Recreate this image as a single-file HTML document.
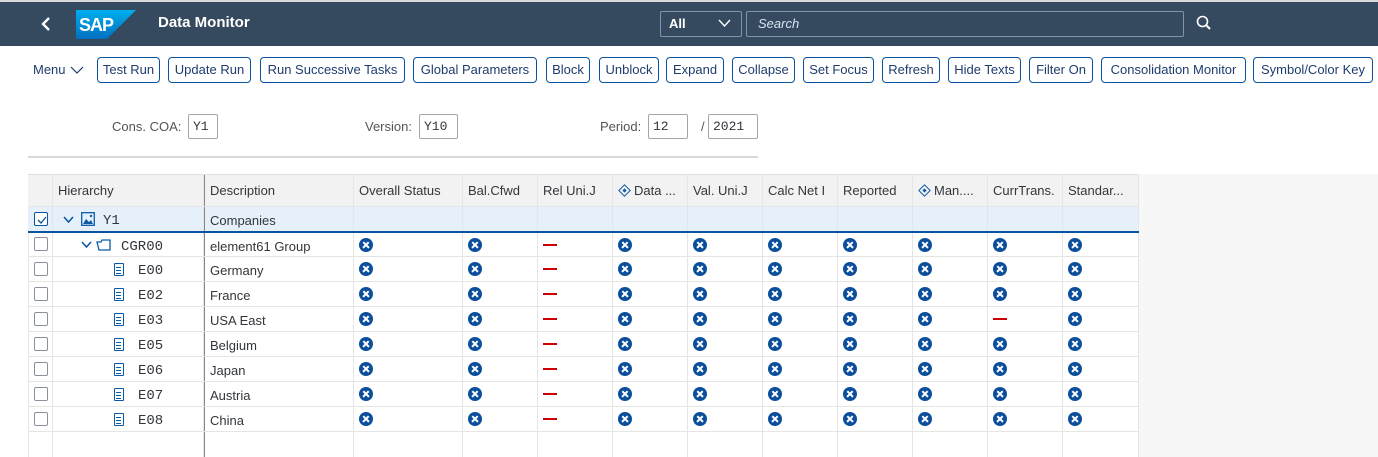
<!DOCTYPE html>
<html><head><meta charset="utf-8"><style>
*{box-sizing:border-box;margin:0;padding:0}
body{width:1378px;height:457px;overflow:hidden;background:#fff;font-family:"Liberation Sans",Arial,sans-serif;position:relative;color:#32363a}
.hdr{position:absolute;left:0;top:0;width:1378px;height:46px;background:#354a5f;border-top:2px solid #d9d9d9}
.abs{position:absolute}
.btn{position:absolute;top:57px;height:26px;border:1px solid #0854a0;border-radius:4px;font-size:13px;line-height:24px;color:#1f3c6e;text-align:center;white-space:nowrap}
.lbl{position:absolute;font-size:13px;color:#555}
.inp{position:absolute;top:114px;height:25px;border:1px solid #a6a6a6;border-radius:2px;font-family:"Liberation Mono",monospace;font-size:13px;line-height:23px;padding-left:4px;color:#32363a;background:#fff}
.row{position:absolute;left:28px;height:25px;width:1111px;border-bottom:1px solid #e5e5e5}
.c{position:absolute;top:0;height:100%;border-right:1px solid #e5e5e5;font-size:13px;line-height:28px;padding-left:5px;white-space:nowrap;overflow:hidden}
.hrow .c{line-height:32px;color:#32363a}
.x{display:inline-block;width:14px;height:14px;border-radius:50%;background:#0b4f9c;position:relative;vertical-align:middle;margin-top:-5px}
.x:before,.x:after{content:"";position:absolute;left:3px;top:6px;width:8px;height:2.4px;background:#fff;transform:rotate(45deg)}
.x:after{transform:rotate(-45deg)}
.d{display:inline-block;width:14px;height:2px;background:#c00;vertical-align:middle;margin-top:-5px}
.cb{position:absolute;left:6px;top:5px;width:14px;height:14px;border:1px solid #89919a;border-radius:2px;background:#fff}
.doc{position:absolute;top:6px;width:10px;height:13px;border:1.5px solid #0b5aa8;border-radius:1px;background:linear-gradient(#0b5aa8,#0b5aa8) 1px 3px/5px 1px no-repeat,linear-gradient(#0b5aa8,#0b5aa8) 1px 6px/5px 1px no-repeat,linear-gradient(#0b5aa8,#0b5aa8) 1px 9px/5px 1px no-repeat}
.mono{font-family:"Liberation Mono",monospace;font-size:14px}
.dia{display:inline-block;width:9px;height:9px;border:1.5px solid #0b5aa8;transform:rotate(45deg);margin:0 5px 0 2px;vertical-align:middle;margin-top:-3px;position:relative}
.dia:after{content:"";position:absolute;left:1.5px;top:1.5px;width:3px;height:3px;background:#0b5aa8}
</style></head><body>
<div class="hdr"></div>
<svg class="abs" style="left:40px;top:16px" width="12" height="16"><path d="M9 2 L3 8 L9 14" stroke="#fff" stroke-width="2.4" fill="none"/></svg>
<svg class="abs" style="left:76px;top:10px" width="60" height="29"><defs><linearGradient id="g" x1="0" y1="0" x2="0" y2="1"><stop offset="0" stop-color="#00aeef"/><stop offset="1" stop-color="#0070c0"/></linearGradient></defs><path d="M0 0H60L31 29H0Z" fill="url(#g)"/><text x="3" y="21" font-family="Liberation Sans" font-weight="bold" font-size="18" fill="#fff" letter-spacing="-1">SAP</text></svg>
<div class="abs" style="left:158px;top:14px;color:#fff;font-weight:bold;font-size:15px">Data Monitor</div>
<div class="abs" style="left:660px;top:11px;width:82px;height:26px;border:1px solid #7d95ad;border-radius:2px;color:#fff;font-size:13px;line-height:24px;padding-left:8px;font-weight:bold">All</div>
<svg class="abs" style="left:718px;top:19px" width="13" height="9"><path d="M1 1 L6.5 7 L12 1" stroke="#fff" stroke-width="1.4" fill="none"/></svg>
<div class="abs" style="left:746px;top:11px;width:438px;height:26px;border:1px solid #7d95ad;border-radius:2px;color:#d6e4f2;font-size:13px;line-height:24px;padding-left:11px;font-style:italic">Search</div>
<svg class="abs" style="left:1196px;top:15px" width="16" height="16"><circle cx="6.5" cy="6.5" r="5" stroke="#fff" stroke-width="1.6" fill="none"/><path d="M10 10 L14 14" stroke="#fff" stroke-width="2"/></svg>

<div class="abs" style="left:33px;top:62px;font-size:13px;color:#1f3c6e">Menu</div>
<svg class="abs" style="left:70px;top:66px" width="14" height="8"><path d="M1 1 L7 7 L13 1" stroke="#1f3c6e" stroke-width="1.2" fill="none"/></svg>
<div class="btn" style="left:97px;width:63px">Test Run</div>
<div class="btn" style="left:168px;width:83px">Update Run</div>
<div class="btn" style="left:260px;width:145px">Run Successive Tasks</div>
<div class="btn" style="left:413px;width:124px">Global Parameters</div>
<div class="btn" style="left:546px;width:44px">Block</div>
<div class="btn" style="left:599px;width:60px">Unblock</div>
<div class="btn" style="left:666px;width:58px">Expand</div>
<div class="btn" style="left:732px;width:63px">Collapse</div>
<div class="btn" style="left:803px;width:71px">Set Focus</div>
<div class="btn" style="left:882px;width:58px">Refresh</div>
<div class="btn" style="left:948px;width:73px">Hide Texts</div>
<div class="btn" style="left:1029px;width:64px">Filter On</div>
<div class="btn" style="left:1101px;width:145px">Consolidation Monitor</div>
<div class="btn" style="left:1253px;width:120px">Symbol/Color Key</div>

<div class="lbl" style="left:112px;top:119px">Cons. COA:</div>
<div class="inp" style="left:188px;width:30px">Y1</div>
<div class="lbl" style="left:365px;top:119px">Version:</div>
<div class="inp" style="left:419px;width:39px">Y10</div>
<div class="lbl" style="left:600px;top:119px">Period:</div>
<div class="inp" style="left:648px;width:40px">12</div>
<div class="lbl" style="left:701px;top:119px">/</div>
<div class="inp" style="left:708px;width:50px">2021</div>
<div class="abs" style="left:28px;top:156px;width:730px;height:2px;background:#d9d9d9"></div>

<div class="abs" style="left:1139px;top:174px;width:239px;height:283px;background:#f7f7f7"></div>
<div class="abs" style="left:28px;top:174px;width:1111px;height:283px;border-left:1px solid #e5e5e5"></div>
<div class="row hrow" style="top:174px;height:33px;background:#f2f2f2;border-top:1px solid #e0e0e0">
<div class="c" style="left:0;width:25px"></div>
<div class="c" style="left:25px;width:151px">Hierarchy</div>
<div class="c" style="left:176px;width:150px;border-left:1px solid #888">Description</div>
<div class="c" style="left:326px;width:109px">Overall Status</div>
<div class="c" style="left:435px;width:75px">Bal.Cfwd</div>
<div class="c" style="left:510px;width:75px">Rel Uni.J</div>
<div class="c" style="left:585px;width:75px"><span class="dia"></span>Data ...</div>
<div class="c" style="left:660px;width:75px">Val. Uni.J</div>
<div class="c" style="left:735px;width:75px">Calc Net I</div>
<div class="c" style="left:810px;width:75px">Reported</div>
<div class="c" style="left:885px;width:75px"><span class="dia"></span>Man....</div>
<div class="c" style="left:960px;width:75px">CurrTrans.</div>
<div class="c" style="left:1035px;width:76px">Standar...</div>
</div>
<div class="row" style="top:207px;background:#e5f0fa;border-bottom:2px solid #0854a0;height:26px">
<div class="c" style="left:0;width:25px"><div class="cb" style="border-color:#0854a0"></div><svg class="abs" style="left:9px;top:9px" width="10" height="8"><path d="M1 4 L4 7 L9 1" stroke="#0854a0" stroke-width="1.3" fill="none"/></svg></div>
<div class="c" style="left:25px;width:151px"><svg class="abs" style="left:10px;top:9px" width="11" height="7"><path d="M1 1 L5.5 6 L10 1" stroke="#0854a0" stroke-width="1.5" fill="none"/></svg><svg class="abs" style="left:28px;top:5px" width="14" height="14"><rect x="0.7" y="0.7" width="12.6" height="12.6" stroke="#0b5aa8" fill="none" stroke-width="1.3"/><path d="M2 12 L5 7 L8 10 L10 8 L12 12Z" fill="#0b5aa8"/><circle cx="10" cy="4" r="1.2" fill="#0b5aa8"/></svg><span class="mono" style="position:absolute;left:50px">Y1</span></div>
<div class="c" style="left:176px;width:150px;border-left:1px solid #888">Companies</div>
<div class="c" style="left:326px;width:109px"></div><div class="c" style="left:435px;width:75px"></div><div class="c" style="left:510px;width:75px"></div><div class="c" style="left:585px;width:75px"></div><div class="c" style="left:660px;width:75px"></div><div class="c" style="left:735px;width:75px"></div><div class="c" style="left:810px;width:75px"></div><div class="c" style="left:885px;width:75px"></div><div class="c" style="left:960px;width:75px"></div><div class="c" style="left:1035px;width:76px"></div>
</div>
<div class="row" style="top:233px;height:24px">
<div class="c" style="left:0;width:25px"><div class="cb" style="top:4px"></div></div>
<div class="c" style="left:25px;width:151px"><svg class="abs" style="left:28px;top:8px" width="11" height="7"><path d="M1 1 L5.5 6 L10 1" stroke="#0854a0" stroke-width="1.5" fill="none"/></svg><svg class="abs" style="left:43px;top:5px" width="16" height="14"><path d="M1 4 H5 L6 2 H14 V12 H3 Z M1 4 L3 12" stroke="#0b5aa8" fill="none" stroke-width="1.3"/></svg><span class="mono" style="position:absolute;left:68px">CGR00</span></div>
<div class="c" style="left:176px;width:150px;border-left:1px solid #888">element61 Group</div>
<div class="c" style="left:326px;width:109px"><span class="x"></span></div><div class="c" style="left:435px;width:75px"><span class="x"></span></div><div class="c" style="left:510px;width:75px"><span class="d"></span></div><div class="c" style="left:585px;width:75px"><span class="x"></span></div><div class="c" style="left:660px;width:75px"><span class="x"></span></div><div class="c" style="left:735px;width:75px"><span class="x"></span></div><div class="c" style="left:810px;width:75px"><span class="x"></span></div><div class="c" style="left:885px;width:75px"><span class="x"></span></div><div class="c" style="left:960px;width:75px"><span class="x"></span></div><div class="c" style="left:1035px;width:76px"><span class="x"></span></div>
</div>

<div class="row" style="top:257px"><div class="c" style="left:0;width:25px"><div class="cb"></div></div><div class="c" style="left:25px;width:151px"><div class="doc" style="left:61px"></div><span class="mono" style="position:absolute;left:85px">E00</span></div><div class="c" style="left:176px;width:150px;border-left:1px solid #888">Germany</div><div class="c" style="left:326px;width:109px"><span class="x"></span></div><div class="c" style="left:435px;width:75px"><span class="x"></span></div><div class="c" style="left:510px;width:75px"><span class="d"></span></div><div class="c" style="left:585px;width:75px"><span class="x"></span></div><div class="c" style="left:660px;width:75px"><span class="x"></span></div><div class="c" style="left:735px;width:75px"><span class="x"></span></div><div class="c" style="left:810px;width:75px"><span class="x"></span></div><div class="c" style="left:885px;width:75px"><span class="x"></span></div><div class="c" style="left:960px;width:75px"><span class="x"></span></div><div class="c" style="left:1035px;width:76px"><span class="x"></span></div></div>

<div class="row" style="top:282px"><div class="c" style="left:0;width:25px"><div class="cb"></div></div><div class="c" style="left:25px;width:151px"><div class="doc" style="left:61px"></div><span class="mono" style="position:absolute;left:85px">E02</span></div><div class="c" style="left:176px;width:150px;border-left:1px solid #888">France</div><div class="c" style="left:326px;width:109px"><span class="x"></span></div><div class="c" style="left:435px;width:75px"><span class="x"></span></div><div class="c" style="left:510px;width:75px"><span class="d"></span></div><div class="c" style="left:585px;width:75px"><span class="x"></span></div><div class="c" style="left:660px;width:75px"><span class="x"></span></div><div class="c" style="left:735px;width:75px"><span class="x"></span></div><div class="c" style="left:810px;width:75px"><span class="x"></span></div><div class="c" style="left:885px;width:75px"><span class="x"></span></div><div class="c" style="left:960px;width:75px"><span class="x"></span></div><div class="c" style="left:1035px;width:76px"><span class="x"></span></div></div>

<div class="row" style="top:307px"><div class="c" style="left:0;width:25px"><div class="cb"></div></div><div class="c" style="left:25px;width:151px"><div class="doc" style="left:61px"></div><span class="mono" style="position:absolute;left:85px">E03</span></div><div class="c" style="left:176px;width:150px;border-left:1px solid #888">USA East</div><div class="c" style="left:326px;width:109px"><span class="x"></span></div><div class="c" style="left:435px;width:75px"><span class="x"></span></div><div class="c" style="left:510px;width:75px"><span class="d"></span></div><div class="c" style="left:585px;width:75px"><span class="x"></span></div><div class="c" style="left:660px;width:75px"><span class="x"></span></div><div class="c" style="left:735px;width:75px"><span class="x"></span></div><div class="c" style="left:810px;width:75px"><span class="x"></span></div><div class="c" style="left:885px;width:75px"><span class="x"></span></div><div class="c" style="left:960px;width:75px"><span class="d"></span></div><div class="c" style="left:1035px;width:76px"><span class="x"></span></div></div>

<div class="row" style="top:332px"><div class="c" style="left:0;width:25px"><div class="cb"></div></div><div class="c" style="left:25px;width:151px"><div class="doc" style="left:61px"></div><span class="mono" style="position:absolute;left:85px">E05</span></div><div class="c" style="left:176px;width:150px;border-left:1px solid #888">Belgium</div><div class="c" style="left:326px;width:109px"><span class="x"></span></div><div class="c" style="left:435px;width:75px"><span class="x"></span></div><div class="c" style="left:510px;width:75px"><span class="d"></span></div><div class="c" style="left:585px;width:75px"><span class="x"></span></div><div class="c" style="left:660px;width:75px"><span class="x"></span></div><div class="c" style="left:735px;width:75px"><span class="x"></span></div><div class="c" style="left:810px;width:75px"><span class="x"></span></div><div class="c" style="left:885px;width:75px"><span class="x"></span></div><div class="c" style="left:960px;width:75px"><span class="x"></span></div><div class="c" style="left:1035px;width:76px"><span class="x"></span></div></div>

<div class="row" style="top:357px"><div class="c" style="left:0;width:25px"><div class="cb"></div></div><div class="c" style="left:25px;width:151px"><div class="doc" style="left:61px"></div><span class="mono" style="position:absolute;left:85px">E06</span></div><div class="c" style="left:176px;width:150px;border-left:1px solid #888">Japan</div><div class="c" style="left:326px;width:109px"><span class="x"></span></div><div class="c" style="left:435px;width:75px"><span class="x"></span></div><div class="c" style="left:510px;width:75px"><span class="d"></span></div><div class="c" style="left:585px;width:75px"><span class="x"></span></div><div class="c" style="left:660px;width:75px"><span class="x"></span></div><div class="c" style="left:735px;width:75px"><span class="x"></span></div><div class="c" style="left:810px;width:75px"><span class="x"></span></div><div class="c" style="left:885px;width:75px"><span class="x"></span></div><div class="c" style="left:960px;width:75px"><span class="x"></span></div><div class="c" style="left:1035px;width:76px"><span class="x"></span></div></div>

<div class="row" style="top:382px"><div class="c" style="left:0;width:25px"><div class="cb"></div></div><div class="c" style="left:25px;width:151px"><div class="doc" style="left:61px"></div><span class="mono" style="position:absolute;left:85px">E07</span></div><div class="c" style="left:176px;width:150px;border-left:1px solid #888">Austria</div><div class="c" style="left:326px;width:109px"><span class="x"></span></div><div class="c" style="left:435px;width:75px"><span class="x"></span></div><div class="c" style="left:510px;width:75px"><span class="d"></span></div><div class="c" style="left:585px;width:75px"><span class="x"></span></div><div class="c" style="left:660px;width:75px"><span class="x"></span></div><div class="c" style="left:735px;width:75px"><span class="x"></span></div><div class="c" style="left:810px;width:75px"><span class="x"></span></div><div class="c" style="left:885px;width:75px"><span class="x"></span></div><div class="c" style="left:960px;width:75px"><span class="x"></span></div><div class="c" style="left:1035px;width:76px"><span class="x"></span></div></div>

<div class="row" style="top:407px"><div class="c" style="left:0;width:25px"><div class="cb"></div></div><div class="c" style="left:25px;width:151px"><div class="doc" style="left:61px"></div><span class="mono" style="position:absolute;left:85px">E08</span></div><div class="c" style="left:176px;width:150px;border-left:1px solid #888">China</div><div class="c" style="left:326px;width:109px"><span class="x"></span></div><div class="c" style="left:435px;width:75px"><span class="x"></span></div><div class="c" style="left:510px;width:75px"><span class="d"></span></div><div class="c" style="left:585px;width:75px"><span class="x"></span></div><div class="c" style="left:660px;width:75px"><span class="x"></span></div><div class="c" style="left:735px;width:75px"><span class="x"></span></div><div class="c" style="left:810px;width:75px"><span class="x"></span></div><div class="c" style="left:885px;width:75px"><span class="x"></span></div><div class="c" style="left:960px;width:75px"><span class="x"></span></div><div class="c" style="left:1035px;width:76px"><span class="x"></span></div></div>

<div class="row" style="top:432px;border-bottom:none"><div class="c" style="left:0;width:25px"></div><div class="c" style="left:25px;width:151px"></div><div class="c" style="left:176px;width:150px;border-left:1px solid #888"></div><div class="c" style="left:326px;width:109px"></div><div class="c" style="left:435px;width:75px"></div><div class="c" style="left:510px;width:75px"></div><div class="c" style="left:585px;width:75px"></div><div class="c" style="left:660px;width:75px"></div><div class="c" style="left:735px;width:75px"></div><div class="c" style="left:810px;width:75px"></div><div class="c" style="left:885px;width:75px"></div><div class="c" style="left:960px;width:75px"></div><div class="c" style="left:1035px;width:76px"></div></div>
</body></html>
